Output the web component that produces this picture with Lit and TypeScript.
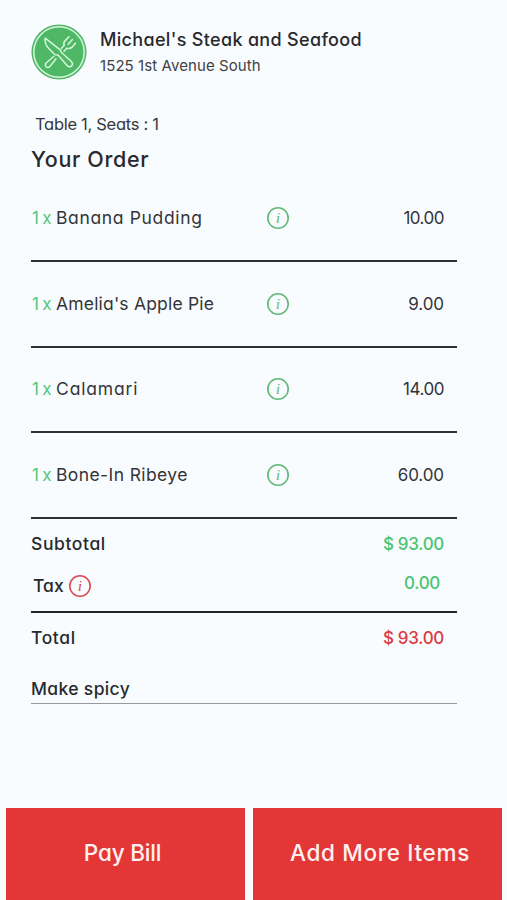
import { LitElement, html, css, svg } from "lit";
import { customElement, property } from "lit/decorators.js";

interface OrderItem {
  name: string;
  price: string;
  tracking: number;
  priceTracking: number;
}

const ITEMS: OrderItem[] = [
  { name: "Banana Pudding", price: "10.00", tracking: 0.65, priceTracking: -0.5 },
  { name: "Amelia's Apple Pie", price: "9.00", tracking: 0.19, priceTracking: -0.1 },
  { name: "Calamari", price: "14.00", tracking: 0.85, priceTracking: -0.45 },
  { name: "Bone-In Ribeye", price: "60.00", tracking: 0.4, priceTracking: -0.1 },
];

@customElement("info-icon")
export class InfoIcon extends LitElement {
  static styles = css`
    :host { display: block; width: 24px; height: 24px; }
    .icon { display: block; }
    .glyph { font: italic 15.5px "Liberation Serif", serif; fill: currentColor; }
  `;
  render() {
    return html`<svg class="icon" width="24" height="24" viewBox="0 0 24 24">
      <circle cx="12" cy="12" r="10.2" fill="none" stroke="currentColor" stroke-width="1.6" />
      <text class="glyph" x="12" y="17" text-anchor="middle">i</text>
    </svg>`;
  }
}

@customElement("restaurant-badge")
export class RestaurantBadge extends LitElement {
  static styles = css`
    :host { display: block; width: 56px; height: 56px; }
    .icon { display: block; }
  `;
  render() {
    return html`<svg class="icon" width="56" height="56" viewBox="0 0 56 56">
      <circle cx="28" cy="28" r="27.6" fill="#52b76c" />
      <circle cx="28" cy="28" r="25.2" fill="#4fb866" stroke="#d5f7da" stroke-width="1.5" />
      ${svg`<g fill="none" stroke="#d5f7da" stroke-width="1.5" stroke-linecap="round" stroke-linejoin="round">
        <path d="M14.2 14.2 C13.6 18 15.5 22.3 18.2 25 L24 30.7 L27 30.9 L35.8 41.3 C37.3 43 39.7 43.1 40.8 41.7 C42 40.2 41.5 38.5 40.1 37.2 L30.2 28.2 L29.5 26.2 Z" />
        <path d="M22.6 32.5 L15.4 38.8 C14 40.2 14 41.7 15.1 42.8 C16.2 43.8 17.8 43.6 19 42.4 L25 34.8" />
        <path d="M30.3 24.4 L33.2 21.2 C32.3 19.2 33 17.7 34.4 16.4 L38 12.8 M33 27.3 L35.8 24.3 C38 25 39.7 24.5 41.3 22.9 L44.4 19.3 M41.4 15.6 L37.2 20.3" />
      </g>`}
    </svg>`;
  }
}

@customElement("order-row")
export class OrderRow extends LitElement {
  @property({ attribute: false }) item!: OrderItem;
  static styles = css`
    :host {
      display: grid; grid-template-columns: 24px 210px 24px 1fr; align-items: center;
      height: 85.5px; padding: 0 13px 0 1px; box-sizing: border-box;
      border-bottom: 2px solid #302e33; font-size: 17px; color: #343438;
    }
    .qty { color: #53c77a; white-space: nowrap; letter-spacing: -0.7px; }
    .name { white-space: nowrap; font-size: 17.5px; padding-bottom: 1px; }
    .info { color: #62b978; }
    .price { text-align: right; }
  `;
  render() {
    const { name, price, tracking, priceTracking } = this.item;
    return html`
      <span class="qty">1 x</span>
      <span class="name" style="letter-spacing:${tracking}px">${name}</span>
      <info-icon class="info"></info-icon>
      <span class="price" style="letter-spacing:${priceTracking}px">${price}</span>
    `;
  }
}

@customElement("app-root")
export class AppRoot extends LitElement {
  static styles = css`
    :host {
      display: flex; flex-direction: column; width: 507px; height: 900px; box-sizing: border-box;
      overflow: hidden; background: #f9fcff; color: #29292d; white-space: nowrap;
      font-family: Inter, "Open Sans", sans-serif; font-feature-settings: "cv11";
    }
    .content { width: 426px; margin-left: 31px; flex: 1; }
    .brand { display: flex; gap: 13px; padding-top: 24px; height: 56px; }
    .brand-text { padding-top: 4px; }
    .title { font-size: 18px; line-height: 24px; font-weight: 500; letter-spacing: 0.33px; }
    .address { font-size: 15px; line-height: 27px; color: #414145; letter-spacing: 0.08px; }
    .table { font-size: 16.5px; line-height: 24px; margin: 32px 0 0 4px; color: #38383c; letter-spacing: -0.29px; }
    .heading { font-size: 21.5px; line-height: 30px; margin-top: 8px; font-weight: 500; letter-spacing: 0.65px; }
    .items { display: block; margin-top: 2.5px; }
    .sum { display: flex; justify-content: space-between; align-items: center; padding-right: 13px; font-size: 17.5px; font-weight: 500; letter-spacing: 0.6px; }
    .amount { font-size: 17px; letter-spacing: -0.3px; }
    .subtotal { height: 51px; }
    .label { padding-bottom: 2px; }
    .tax { height: 32px; padding: 0 17px 9px 2px; border-bottom: 2px solid #252428; }
    .tax-label { display: flex; align-items: center; gap: 4px; padding-top: 1px; letter-spacing: 0; }
    .tax .amount { padding-bottom: 5px; }
    .tax-icon { color: #d84b50; }
    .total { height: 50px; }
    .green { color: #48c571; }
    .red { color: #db3b42; }
    .note { font-size: 17.5px; line-height: 28px; font-weight: 500; letter-spacing: 0.35px; padding-top: 12px; border-bottom: 1px solid #98999c; }
    .actions { display: grid; grid-template-columns: 239px 249px; gap: 8px; height: 92.5px; padding-left: 6px; }
    .button { background: #e33737; color: #fff1ef; font-size: 22.5px; font-weight: 500; display: flex; justify-content: center; align-items: center; box-sizing: border-box; padding-bottom: 3px; }
    .pay { padding-right: 6px; letter-spacing: -0.2px; }
    .add { padding-left: 5px; letter-spacing: 0.68px; }
  `;
  render() {
    return html`
      <main class="content">
        <header class="brand">
          <restaurant-badge></restaurant-badge>
          <div class="brand-text">
            <div class="title">Michael's Steak and Seafood</div>
            <div class="address">1525 1st Avenue South</div>
          </div>
        </header>
        <div class="table">Table 1, Seats : 1</div>
        <div class="heading">Your Order</div>
        <section class="items">${ITEMS.map((item) => html`<order-row .item=${item}></order-row>`)}</section>
        <div class="sum subtotal"><span class="label">Subtotal</span><span class="amount green">$ 93.00</span></div>
        <div class="sum tax">
          <span class="tax-label"><span class="label">Tax</span><info-icon class="tax-icon"></info-icon></span>
          <span class="amount green">0.00</span>
        </div>
        <div class="sum total"><span>Total</span><span class="amount red">$ 93.00</span></div>
        <div class="note">Make spicy</div>
      </main>
      <footer class="actions">
        <div class="button pay">Pay Bill</div>
        <div class="button add">Add More Items</div>
      </footer>
    `;
  }
}
